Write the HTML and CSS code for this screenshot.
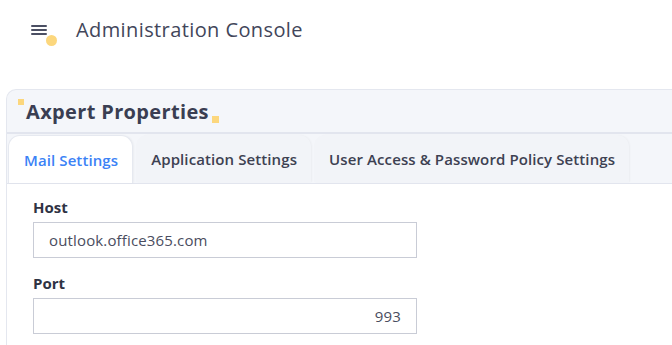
FILE: index.html
```html
<!DOCTYPE html>
<html lang="en">
<head>
    <meta charset="UTF-8">
    <meta name="viewport" content="width=device-width, initial-scale=1.0">
    <title>Administration Console</title>
    <link rel="stylesheet" href="styles.css">
</head>
<body>
    <div class="topbar">
        <div class="menu-btn">
            <svg width="18" height="12" viewBox="0 0 18 12">
                <rect x="0" y="1" width="16" height="2" rx="1" fill="#4b4f63"/>
                <rect x="0" y="5" width="16" height="2" rx="1" fill="#4b4f63"/>
                <rect x="0" y="9" width="16" height="2" rx="1" fill="#4b4f63"/>
            </svg>
            <span class="dot"></span>
        </div>
        <h1>Administration Console</h1>
    </div>

    <div class="card">
        <div class="card-head">
            <span class="mark mark-a"></span>
            <h2>Axpert Properties</h2>
            <span class="mark mark-b"></span>
        </div>
        <div class="tabs">
            <div class="tab active">Mail Settings</div>
            <div class="tab">Application Settings</div>
            <div class="tab">User Access &amp; Password Policy Settings</div>
        </div>
        <div class="card-body">
            <label for="host">Host</label>
            <input type="text" id="host" value="outlook.office365.com">

            <label for="port">Port</label>
            <input type="text" id="port" class="num" value="993">
        </div>
    </div>
</body>
</html>
```

FILE: styles.css
```css
body {
    font-family: "Open Sans", "Noto Sans", sans-serif;
    background: #ffffff;
    margin: 0;
    color: #3d4152;
}

.topbar {
    display: flex;
    align-items: center;
    height: 59px;
    padding-left: 31px;
}

.menu-btn {
    position: relative;
    width: 18px;
    height: 12px;
    margin-right: 27px;
}

.menu-btn svg {
    display: block;
}

.dot {
    position: absolute;
    left: 15px;
    top: 11px;
    width: 11px;
    height: 11px;
    border-radius: 50%;
    background: #fcd77d;
}

h1 {
    margin: 0;
    font-size: 20px;
    font-weight: 400;
    letter-spacing: 0.4px;
    color: #42465a;
}

.card {
    margin: 30px 0 0 6px;
    border: 1px solid #e4e7ef;
    border-right: none;
    border-radius: 10px 0 0 0;
    background: #f4f6fa;
    overflow: hidden;
}

.card-head {
    position: relative;
    height: 42px;
    display: flex;
    align-items: center;
    padding-left: 19px;
    border-bottom: 2px solid #e2e5ee;
}

h2 {
    margin: 0;
    font-size: 20px;
    font-weight: 700;
    letter-spacing: 0.35px;
    color: #3a3e52;
}

.mark {
    position: absolute;
    background: #fcd77d;
}

.mark-a {
    left: 11px;
    top: 9px;
    width: 6px;
    height: 6px;
}

.mark-b {
    left: 205px;
    top: 26px;
    width: 7px;
    height: 7px;
}

.tabs {
    display: flex;
    gap: 3px;
    padding: 1px 0 0 1px;
    border-bottom: 1px solid #e2e5ee;
}

.tab {
    height: 47px;
    display: flex;
    align-items: center;
    padding: 0 14px 0 15px;
    font-size: 15px;
    font-weight: 600;
    letter-spacing: 0.1px;
    color: #3d4152;
    background: #f2f4f8;
    border-radius: 12px 12px 0 0;
    box-shadow: 1px 0 2px rgba(0, 0, 0, 0.04);
}

.tab.active {
    background: #ffffff;
    color: #3b82f6;
    border: 1px solid #e6e9f0;
    border-bottom: none;
}

.card-body {
    background: #ffffff;
    padding: 13px 0 20px 26px;
}

label {
    display: block;
    font-size: 15px;
    font-weight: 700;
    color: #2f3344;
    margin-bottom: 5px;
}

input[type="text"] {
    display: block;
    box-sizing: border-box;
    width: 384px;
    height: 36px;
    padding: 0 15px;
    margin-bottom: 15px;
    border: 1px solid #c9ccd6;
    border-radius: 0;
    font-family: inherit;
    font-size: 15px;
    letter-spacing: 0.15px;
    color: #4a4d60;
}

input.num {
    text-align: right;
}
```
